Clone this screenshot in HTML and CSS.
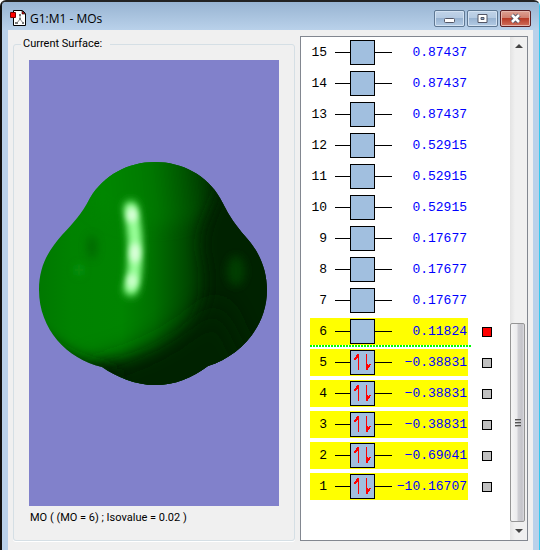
FILE: index.html
```html
<!DOCTYPE html>
<html lang="en">
<head>
    <meta charset="UTF-8">
    <meta name="viewport" content="width=device-width, initial-scale=1.0">
    <title>G1:M1 - MOs</title>
    <link rel="stylesheet" href="styles.css">
</head>
<body>
    <div class="window">
        <header class="titlebar">
            <svg class="app-icon" width="16" height="16" viewBox="0 0 16 16">
                <path d="M3.500 .5h9l3 3v12h-12z" fill="#fff" stroke="#000"/>
                <path d="M12 1v3h3z" fill="#e00" stroke="#000" stroke-width=".6"/>
                <path d="M10 5v5M10 9l-3 4M10 9l3 4" stroke="#888" fill="none"/>
                <path d="M9 4h2v2H9zM5 12h3v2H5zM12 12h2v2h-2zM9 8h2v2H9z" fill="#777"/>
                <path d="M.5 2.500h5v5h-5z" fill="#f00" stroke="#700"/>
            </svg>
            <h1>G1:M1 - MOs</h1>
            <div class="window-buttons">
                <button type="button" class="win-btn" aria-label="Minimize">
                    <svg width="13" height="11" viewBox="0 0 13 11"><rect x="1.500" y="5.500" width="10" height="4" rx="1" fill="#fff" stroke="#535666"/></svg>
                </button>
                <button type="button" class="win-btn" aria-label="Maximize">
                    <svg width="11" height="11" viewBox="0 0 11 11"><path d="M1 1.500h9v8H1z" fill="#fff" stroke="#535666"/><path d="M4 4.500h3v2H4z" fill="#8eabcb" stroke="#535666"/></svg>
                </button>
                <button type="button" class="win-btn win-close" aria-label="Close">
                    <svg width="13" height="11" viewBox="0 0 13 11"><path d="M3 2l7 7M10 2L3 9" stroke="#535666" stroke-width="4.500"/><path d="M3 2l7 7M10 2L3 9" stroke="#fff" stroke-width="2.500"/></svg>
                </button>
            </div>
        </header>

        <main class="content">
            <fieldset class="surface">
                <legend>Current Surface:</legend>
                <div class="viewport">
                    <svg viewBox="0 0 250 446" preserveAspectRatio="xMidYMid meet">
                        <defs>
                            <linearGradient id="body" gradientUnits="userSpaceOnUse" x1="10" y1="0" x2="240" y2="0">
                                <stop offset="0" stop-color="#007800"/>
                                <stop offset=".14" stop-color="#008200"/>
                                <stop offset=".36" stop-color="#008400"/>
                                <stop offset=".5" stop-color="#007000"/>
                                <stop offset=".62" stop-color="#005000"/>
                                <stop offset=".73" stop-color="#002e00"/>
                                <stop offset=".78" stop-color="#002200"/>
                                <stop offset="1" stop-color="#002200"/>
                            </linearGradient>
                            <linearGradient id="top" gradientUnits="userSpaceOnUse" x1="80" y1="130" x2="190" y2="118">
                                <stop offset="0" stop-color="#008600"/>
                                <stop offset=".4" stop-color="#007800"/>
                                <stop offset=".7" stop-color="#005400"/>
                                <stop offset="1" stop-color="#002200"/>
                            </linearGradient>
                            <filter id="shade" filterUnits="userSpaceOnUse" x="-60" y="40" width="370" height="360"><feGaussianBlur stdDeviation="14"/></filter>
                            <filter id="soft" filterUnits="userSpaceOnUse" x="-60" y="40" width="370" height="360"><feGaussianBlur stdDeviation="8"/></filter>
                            <filter id="glow" filterUnits="userSpaceOnUse" x="0" y="100" width="250" height="230"><feGaussianBlur stdDeviation="4"/></filter>
                            <filter id="core" filterUnits="userSpaceOnUse" x="0" y="100" width="250" height="230"><feGaussianBlur stdDeviation="3"/></filter>
                            <clipPath id="lobe">
                                <path d="M126 102C153 102 178 115 191 138C198 150 199 156 216 176C229 190 238 208 238 230C238 267 211 296 179 306C163 318 146 325 126 325C106 325 88 317 73 307C38 299 10 269 10 230C10 205 20 190 33 175C45 162 52 155 61 138C75 115 99 102 126 102Z"/>
                            </clipPath>
                        </defs>
                        <g clip-path="url(#lobe)">
                            <rect width="250" height="446" fill="url(#body)"/>
                            <ellipse cx="126" cy="125" rx="72" ry="40" fill="url(#top)" filter="url(#soft)"/>
                            <path d="M198 105C194 140 172 160 174 190C180 215 182 235 168 262C150 285 125 303 70 306L60 360H270V105Z" fill="#002200" filter="url(#soft)"/>
                            <path d="M190 240C160 270 120 298 60 310L60 370H250Z" fill="#002200" filter="url(#shade)"/>
                            <path d="M-10 262C22 284 42 302 88 310L86 350H-10Z" fill="#001a00" filter="url(#soft)"/>
                            <ellipse cx="63" cy="187" rx="5" ry="12" fill="#006400" filter="url(#glow)" opacity=".8"/>
                            <ellipse cx="50" cy="210" rx="4" ry="6" fill="#109a18" filter="url(#glow)" opacity=".8"/>
                            <ellipse cx="207" cy="211" rx="9" ry="15" fill="#003c00" filter="url(#glow)"/>
                            <path d="M102 147C105 165 107 180 106 195C106 210 105 220 102 230" fill="none" stroke="#38c038" stroke-width="15" stroke-linecap="round" filter="url(#glow)"/>
                            <path d="M102 149C105 165 107 180 106 195C106 210 105 220 102 228" fill="none" stroke="#98ff98" stroke-width="12" stroke-linecap="round" filter="url(#core)"/>
                            <ellipse cx="103" cy="155" rx="5" ry="7" fill="#e0ffe0" filter="url(#core)"/>
                            <ellipse cx="106" cy="193" rx="5" ry="10" fill="#e0ffe0" filter="url(#core)"/>
                            <ellipse cx="103" cy="221" rx="5" ry="7" fill="#d0ffd0" filter="url(#core)"/>
                        </g>
                    </svg>
                </div>
                <p class="caption">MO ( (MO = 6) ; Isovalue = 0.02 )</p>
            </fieldset>

            <section class="orbitals">
                <table id="orbital-table">
                    <tbody></tbody>
                </table>
                <div class="scrollbar">
                    <button type="button" class="scroll-btn" aria-label="Scroll up">
                        <svg width="8" height="4" viewBox="0 0 8 4"><path d="M4 0l4 4H0z" fill="#444"/></svg>
                    </button>
                    <div class="track">
                        <div class="thumb"><i></i><i></i><i></i></div>
                    </div>
                    <button type="button" class="scroll-btn" aria-label="Scroll down">
                        <svg width="8" height="4" viewBox="0 0 8 4"><path d="M0 0h8L4 4z" fill="#444"/></svg>
                    </button>
                </div>
            </section>
        </main>
    </div>

    <script>
        // Orbital energies, highest first
        const energies = [
            '0.87437', '0.87437', '0.87437', '0.52915', '0.52915',
            '0.52915', '0.17677', '0.17677', '0.17677', '0.11824',
            '-0.38831', '-0.38831', '-0.38831', '-0.69041', '-10.16707'
        ];
        const lumo = 6;
        const current = 6;

        // Up and down electrons of a filled level
        const electrons = `<path d="M23 5h1v16h-1zM23 5v4h-1v1h-1v1h-2v-2h1v-1h1v-2h1v-1z
            M31 5h1v16h-1zM32 21v-6h1v1h1v-1h2v1h-1v2h-1v1h-1v2z" fill="#f00" shape-rendering="crispEdges"/>`;

        // Function to draw one energy level
        function levelSvg(filled) {
            return `<svg class="level" width="57" height="27" viewBox="0 0 57 27">
                <path d="M0 13.500h57" stroke="#000"/>
                <rect x="15.500" y="1.500" width="24" height="24" fill="#a1bfdf" stroke="#000"/>
                ${filled ? electrons : ''}
            </svg>`;
        }

        const body = document.querySelector('#orbital-table tbody');
        energies.forEach((energy, i) => {
            const mo = energies.length - i;
            const row = body.insertRow();
            if (mo <= lumo) row.classList.add('selected');
            if (mo === lumo) row.classList.add('lumo');
            const check = mo <= lumo
                ? `<input type="checkbox" aria-label="Surface ${mo}" ${mo === current ? 'checked' : ''}>`
                : '';
            row.innerHTML = `<td class="number">${mo}</td>
                <td class="diagram">${levelSvg(mo < lumo)}</td>
                <td class="energy">${energy.replace('-', '\u2212')}</td>
                <td class="check">${check}</td>`;
        });
    </script>
</body>
</html>
```
FILE: styles.css
```css
* {
    box-sizing: border-box;
}

body {
    margin: 0;
    font-family: Roboto, Arial, sans-serif;
    font-size: 11px;
    color: #000;
}

.window {
    display: flex;
    flex-direction: column;
    min-height: 100vh;
    padding: 0 6px;
    background: #b9d1ea;
    border-top: 2px solid #222;
    border-left: 2px solid #111;
    border-right: 1px solid #35c8ee;
    border-radius: 6px 6px 0 0;
}

.titlebar {
    display: flex;
    align-items: center;
    height: 28px;
    margin: 0 -6px;
    padding: 0 8px;
    background: linear-gradient(#98b4d2, #b9d1ea);
    border-radius: 4px 4px 0 0;
}

.app-icon {
    margin-top: 4px;
}

.titlebar h1 {
    flex: 1;
    margin: 6px 0 0 4px;
    font: 12px/16px "Open Sans", "Noto Sans", sans-serif;
}

.window-buttons {
    display: flex;
    gap: 2px;
    margin-top: 5px;
}

.win-btn {
    display: flex;
    align-items: center;
    justify-content: center;
    width: 31px;
    height: 17px;
    padding: 0;
    border: 1px solid #5f7893;
    border-radius: 2px;
    background: linear-gradient(#c1d3e8 0%, #b3c9e1 50%, #98b3d1 50%, #b3cbe4 100%);
    box-shadow: inset 0 0 0 1px #d3e2f2;
}

.win-close {
    border-color: #5b1e22;
    background: linear-gradient(#dda193 0%, #cf7b6b 50%, #b83b27 50%, #d0705c 100%);
    box-shadow: inset 0 0 0 1px #e5b5ab;
}

.content {
    flex: 1;
    display: flex;
    gap: 5px;
    padding: 6px 5px 9px;
    background: #f0f0f0;
}

.surface {
    flex: 1;
    display: flex;
    flex-direction: column;
    min-width: 0;
    margin: 0;
    padding: 8px 15px 16px;
    border: 1px solid #d5dfe5;
    border-radius: 3px;
    box-shadow: 0 1px 0 #fff;
}

.surface legend {
    margin-left: -8px;
    padding: 2px 8px 2px 2px;
    line-height: 12px;
}

.viewport {
    flex: 1;
    display: flex;
    background: #8181cb;
}

.viewport svg {
    width: 100%;
    height: auto;
}

.caption {
    margin: 6px 0 0 1px;
    line-height: 12px;
}

.orbitals {
    display: flex;
    justify-content: space-between;
    width: 228px;
    padding: 2px 0 0 9px;
    background: #fff;
    border: 1px solid #828790;
}

#orbital-table {
    align-self: flex-start;
    border-spacing: 0;
    font: 13px/15px "Liberation Mono", "Courier New", monospace;
}

#orbital-table td {
    height: 31px;
    padding: 0;
    border-bottom: 4px solid transparent;
    background-clip: padding-box;
}

.selected .number,
.selected .diagram,
.selected .energy {
    background-color: #ff0;
}

#orbital-table .number {
    position: relative;
    width: 25px;
    padding-right: 8px;
    text-align: right;
}

.diagram {
    width: 57px;
}

.level {
    display: block;
}

#orbital-table .energy {
    width: 76px;
    padding-right: 1px;
    text-align: right;
    color: #00f;
}

#orbital-table .check {
    padding-left: 14px;
}

/* Dotted line between occupied and virtual levels */
.lumo .number::after {
    content: "";
    position: absolute;
    left: 0;
    top: 27px;
    width: 162px;
    height: 2px;
    background: repeating-linear-gradient(90deg, #0f0 0 2px, #fff 2px 3px);
}

.check input {
    appearance: none;
    display: block;
    width: 10px;
    height: 10px;
    margin: 0;
    border: 1px solid #000;
    background: #c0c0c0;
}

.check input:checked {
    background: #f00;
}

.scrollbar {
    display: flex;
    flex-direction: column;
    width: 17px;
    margin-top: -2px;
    background: linear-gradient(90deg, #e3e3e3, #f0f0f0 30%, #f0f0f0);
}

.scroll-btn {
    display: flex;
    align-items: center;
    justify-content: center;
    height: 18px;
    padding: 0;
    border: none;
    background: none;
}

.track {
    flex: 1;
    display: flex;
    flex-direction: column;
}

.track::before {
    content: "";
    flex: 15;
}

.thumb {
    flex: 11;
    display: flex;
    flex-direction: column;
    align-items: center;
    justify-content: center;
    gap: 1px;
    margin-right: 2px;
    border: 1px solid #959595;
    border-radius: 2px;
    background: linear-gradient(90deg, #f5f5f5 0%, #ebebed 48%, #d0d0d5 52%, #c3c3c9 85%, #dcdce0 100%);
}

.thumb i {
    width: 6px;
    height: 2px;
    border-top: 1px solid #555;
    border-bottom: 1px solid #aaa;
}
```
